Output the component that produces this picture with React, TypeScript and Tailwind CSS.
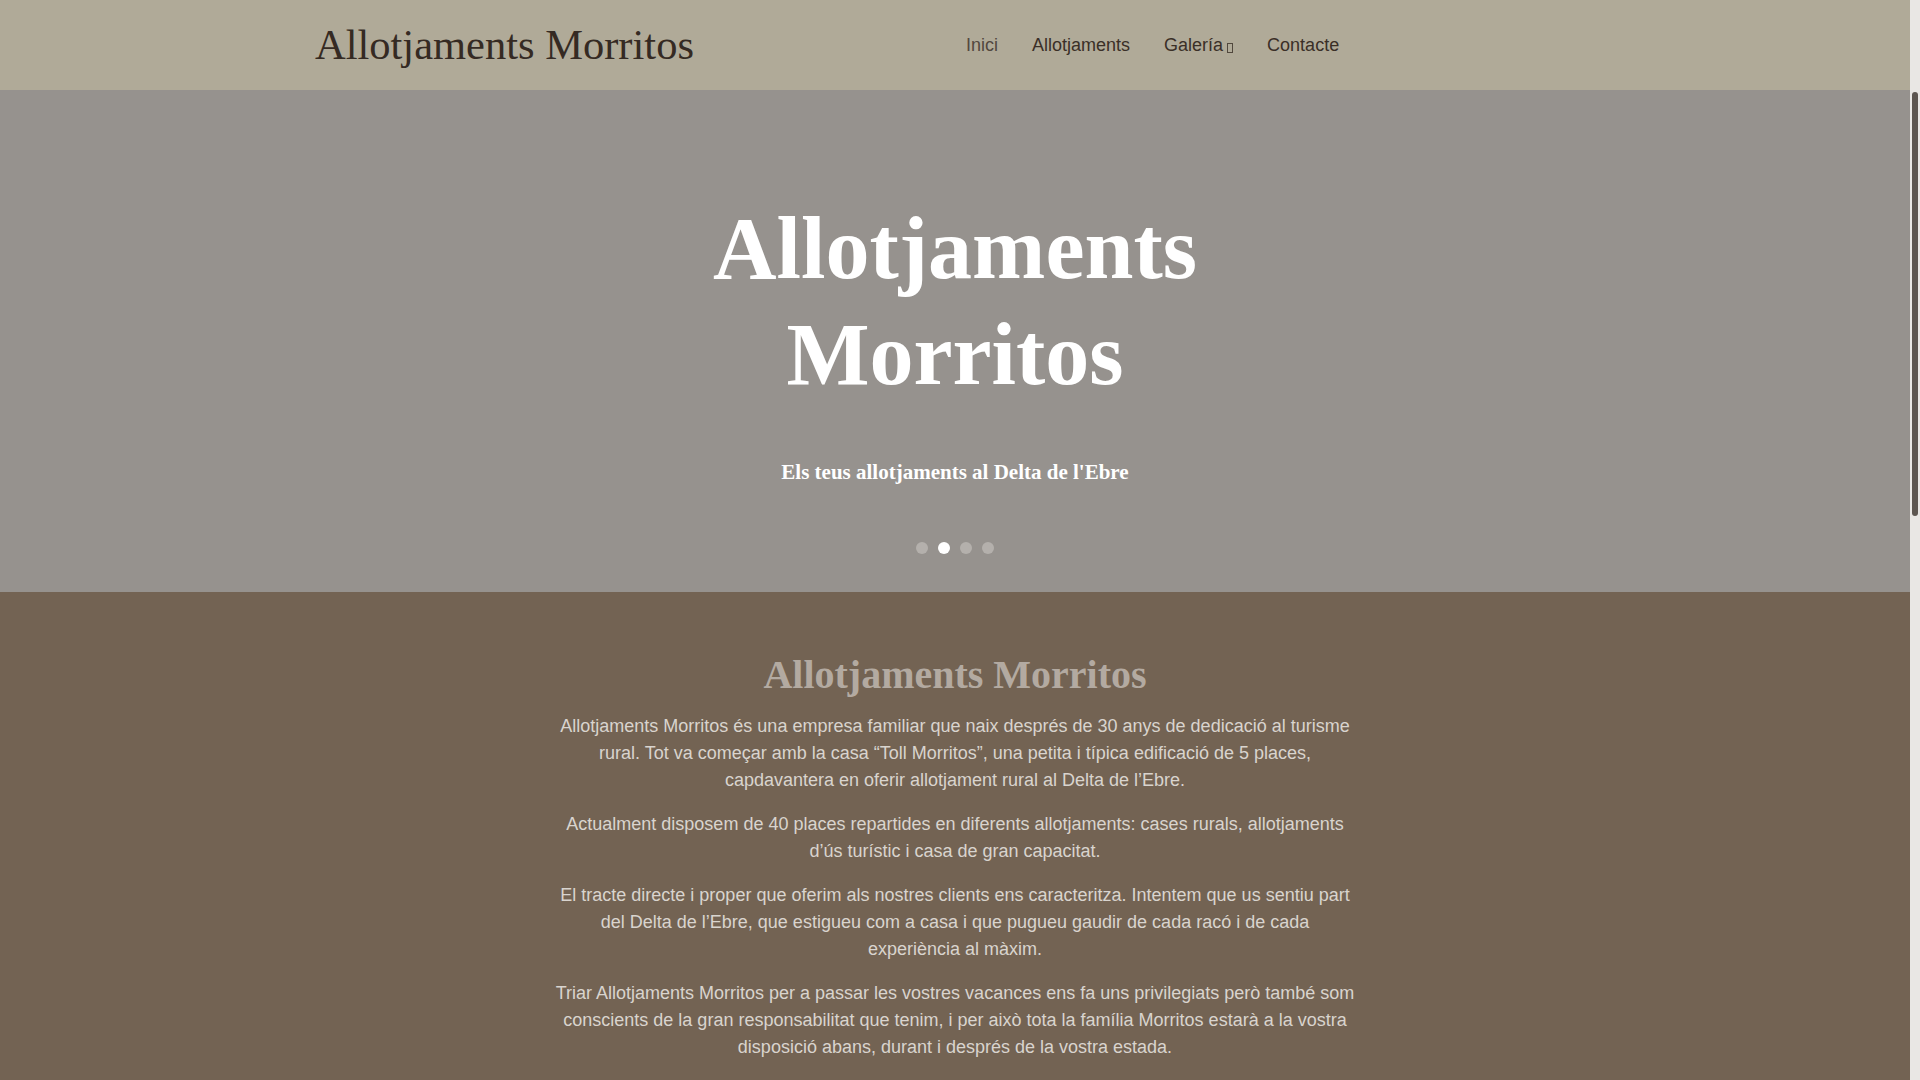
import React from 'react';

const serif = { fontFamily: '"Liberation Serif", "Times New Roman", serif' };

const paragraphs = [
    'Allotjaments Morritos és una empresa familiar que naix després de 30 anys de dedicació al turisme rural. Tot va começar amb la casa “Toll Morritos”, una petita i típica edificació de 5 places, capdavantera en oferir allotjament rural al Delta de l’Ebre.',
    'Actualment disposem de 40 places repartides en diferents allotjaments: cases rurals, allotjaments d’ús turístic i casa de gran capacitat.',
    'El tracte directe i proper que oferim als nostres clients ens caracteritza. Intentem que us sentiu part del Delta de l’Ebre, que estigueu com a casa i que pugueu gaudir de cada racó i de cada experiència al màxim.',
    'Triar Allotjaments Morritos per a passar les vostres vacances ens fa uns privilegiats però també som conscients de la gran responsabilitat que tenim, i per això tota la família Morritos estarà a la vostra disposició abans, durant i després de la vostra estada.',
];

const NavItem: React.FC<{ label: string; active?: boolean; caret?: boolean }> = ({ label, active, caret }) => (
    <a
        href="#"
        className={`px-[17px] text-[18px] leading-[90px] flex items-center ${active ? 'text-[#52473e]' : 'text-[#3a2f27]'}`}
    >
        {label}
        {caret && <span className="inline-block w-[6px] h-[10px] border border-current ml-[4px] mt-[5px] opacity-80" />}
    </a>
);

const App: React.FC = () => {
    const slide = 1;

    return (
        <div className="h-screen flex overflow-hidden bg-[#736353]" style={{ fontFamily: '"Liberation Sans", Arial, sans-serif' }}>
            <main className="flex-1 min-w-0">
                {/* Header */}
                <header className="bg-[#b0aa98] h-[90px]">
                    <div className="w-[1280px] mx-auto grid grid-cols-[634px_auto] items-center h-full">
                        <a href="#" className="text-[42.5px] text-[#352a23] leading-none" style={serif}>
                            Allotjaments Morritos
                        </a>
                        <nav className="flex">
                            <NavItem label="Inici" active />
                            <NavItem label="Allotjaments" />
                            <NavItem label="Galería" caret />
                            <NavItem label="Contacte" />
                        </nav>
                    </div>
                </header>

                {/* Hero slider */}
                <section className="bg-[#96928e] pt-[106px] pb-[38px] flex flex-col items-center text-white text-center">
                    <h1 className="text-[88px] font-bold leading-[1.2] w-[520px]" style={serif}>
                        Allotjaments Morritos
                    </h1>
                    <p className="mt-[50px] text-[21px] font-bold leading-[1.5]" style={serif}>
                        Els teus allotjaments al Delta de l'Ebre
                    </p>
                    <div className="mt-[53px] flex gap-[10px]">
                        {[0, 1, 2, 3].map(i => (
                            <span
                                key={i}
                                className={`w-3 h-3 rounded-full ${i === slide ? 'bg-white' : 'bg-[#b4b0ac]'}`}
                            />
                        ))}
                    </div>
                </section>

                {/* About */}
                <section className="pt-[61px] pb-[80px] flex flex-col items-center text-center">
                    <h2 className="text-[40px] font-bold leading-[1.1] text-[#b3aaa1]" style={serif}>
                        Allotjaments Morritos
                    </h2>
                    <div className="mt-[16px] w-[803px] text-[18px] leading-[27px] text-[#d9d4ce] space-y-[17px]">
                        {paragraphs.map((p, i) => (
                            <p key={i}>{p}</p>
                        ))}
                    </div>
                </section>
            </main>

            {/* scrollbar */}
            <aside className="w-[10px] bg-[#e9e7e4] flex flex-col pt-[92px] px-[2px]">
                <div className="h-[424px] rounded-full bg-[#5d5650]" />
            </aside>
        </div>
    );
};

export default App;
